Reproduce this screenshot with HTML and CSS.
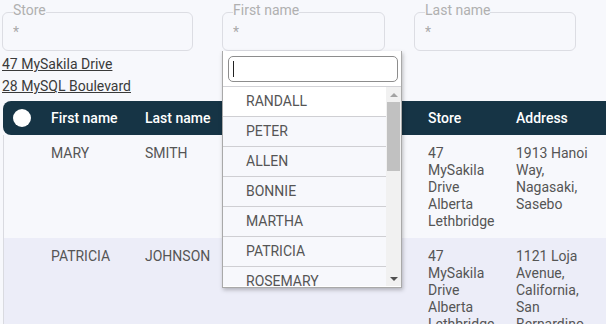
FILE: index.html
```html
<!DOCTYPE html>
<html lang="en">
<head>
<meta charset="utf-8">
<title>Customers</title>
<link rel="stylesheet" href="styles.css">
</head>
<body>
<div class="page">
  <div class="filters">
    <fieldset class="filter filter-store">
      <legend>Store</legend>
      <input class="filter-input" placeholder="*">
    </fieldset>
    <fieldset class="filter filter-first">
      <legend>First name</legend>
      <input class="filter-input" placeholder="*">
      <div class="dropdown">
        <label class="search-box"><input class="dropdown-search" autofocus></label>
        <div class="dropdown-body">
          <ul class="dropdown-list">
            <li class="dropdown-item active">RANDALL</li>
            <li class="dropdown-item">PETER</li>
            <li class="dropdown-item">ALLEN</li>
            <li class="dropdown-item">BONNIE</li>
            <li class="dropdown-item">MARTHA</li>
            <li class="dropdown-item">PATRICIA</li>
            <li class="dropdown-item">ROSEMARY</li>
            <li class="dropdown-item">MARY</li>
            <li class="dropdown-item">LINDA</li>
            <li class="dropdown-item">BARBARA</li>
          </ul>
          <div class="scrollbar">
            <span class="sb-btn"><span class="tri tri-up"></span></span>
            <span class="sb-track"><span class="sb-thumb"></span></span>
            <span class="sb-btn"><span class="tri tri-down"></span></span>
          </div>
        </div>
      </div>
    </fieldset>
    <fieldset class="filter filter-last">
      <legend>Last name</legend>
      <input class="filter-input" placeholder="*">
    </fieldset>
  </div>
  <div class="links">
    <a href="#">47 MySakila Drive</a>
    <a href="#">28 MySQL Boulevard</a>
  </div>
  <div class="table-wrap">
    <table class="grid">
      <colgroup>
        <col class="c-check"><col class="c-first"><col class="c-last"><col class="c-email"><col class="c-store"><col class="c-address"><col class="c-city">
      </colgroup>
      <thead>
        <tr>
          <th class="check"><span class="dot"></span></th>
          <th>First name</th>
          <th>Last name</th>
          <th>Email</th>
          <th>Store</th>
          <th>Address</th>
          <th>City</th>
        </tr>
      </thead>
      <tbody>
        <tr class="row">
          <td class="check"></td>
          <td>MARY</td>
          <td>SMITH</td>
          <td></td>
          <td>47 MySakila Drive Alberta Lethbridge</td>
          <td>1913 Hanoi Way, Nagasaki, Sasebo</td>
          <td>Sasebo</td>
        </tr>
        <tr class="row alt">
          <td class="check"></td>
          <td>PATRICIA</td>
          <td>JOHNSON</td>
          <td></td>
          <td>47 MySakila Drive Alberta Lethbridge</td>
          <td>1121 Loja Avenue, California, San Bernardino</td>
          <td>San Bernardino</td>
        </tr>
      </tbody>
    </table>
  </div>
</div>
</body>
</html>
```

FILE: styles.css
```css
* { box-sizing: border-box; }

html, body {
  margin: 0;
  background: #f7f8fc;
  font-family: Roboto, "Liberation Sans", sans-serif;
  color: #555;
}

.page {
  width: 606px;
  height: 324px;
  overflow: hidden;
  padding: 2px 0 0 0;
}

.filters {
  display: flex;
  gap: 29px;
  padding-left: 2px;
}

.filter {
  position: relative;
  margin: 0;
  padding: 2px 10px 10px;
  border: 1px solid #dcdde3;
  border-radius: 6px;
  min-width: 0;
}

.filter-store { width: 191px; }
.filter-first { width: 163px; }
.filter-last { width: 162px; }

.filter legend {
  padding: 0 0 4px 0;
  font-size: 14px;
  line-height: 16px;
  color: #b0b0b0;
}

.filter-input {
  display: block;
  width: 100%;
  height: 16px;
  padding: 0;
  border: none;
  background: transparent;
  font-family: inherit;
  font-size: 14px;
  line-height: 16px;
  color: #555;
  outline: none;
}

.filter-input::placeholder { color: #aaa; }

.links {
  display: flex;
  flex-direction: column;
  margin-top: 2px;
  padding-left: 2px;
}

.links a {
  font-size: 14px;
  line-height: 22px;
  color: #3a3a3a;
  text-decoration: underline;
  width: max-content;
}

.table-wrap {
  margin-top: 4px;
  padding-left: 3px;
}

.grid {
  table-layout: fixed;
  width: 717px;
  border-collapse: separate;
  border-spacing: 0;
  font-size: 14px;
}

.c-check { width: 36px; }
.c-first { width: 94px; }
.c-last { width: 94px; }
.c-email { width: 189px; }
.c-store { width: 88px; }
.c-address { width: 96px; }
.c-city { width: 120px; }

.grid th {
  height: 34px;
  padding: 0 8px 0 12px;
  background: #163445;
  color: #fff;
  font-weight: 500;
  text-align: left;
  vertical-align: middle;
  white-space: nowrap;
}

.grid th.check {
  padding: 0 0 0 10px;
  border-radius: 8px 0 0 8px;
}

.dot {
  display: block;
  width: 18px;
  height: 18px;
  border-radius: 50%;
  background: #fff;
}

.grid td {
  padding: 10px 8px 8px 12px;
  line-height: 17px;
  vertical-align: top;
  color: #555;
}

.grid td.check { border-left: 1px solid #d9dae0; }

.row.alt td { background: #ecedf8; }

.dropdown {
  position: absolute;
  left: -1px;
  top: calc(100% + 1px);
  z-index: 5;
  display: flex;
  flex-direction: column;
  width: 180px;
  height: 237px;
  padding-top: 5px;
  background: #fff;
  border: 1px solid #a9a9a9;
  border-top: none;
  box-shadow: 1px 2px 4px rgba(0, 0, 0, 0.25);
}

.search-box {
  position: relative;
  display: block;
  margin: 0 0 0 5px;
  width: 170px;
  height: 26px;
}

.search-box::after {
  content: "";
  position: absolute;
  left: 5px;
  top: 5px;
  width: 1px;
  height: 16px;
  background: #222;
}

.dropdown-search {
  display: block;
  width: 170px;
  height: 26px;
  padding: 0 4px;
  border: 1px solid #8d8d8d;
  border-radius: 5px;
  background: #fff;
  font-family: inherit;
  font-size: 14px;
  outline: none;
  caret-color: transparent;
}

.dropdown-body {
  display: flex;
  margin-top: 4px;
  height: 200px;
  border-top: 1px solid #d2d2d6;
}

.dropdown-list {
  flex: 1;
  list-style: none;
  margin: 0;
  padding: 0;
  overflow: hidden;
}

.dropdown-item {
  height: 30px;
  line-height: 29px;
  padding-left: 23px;
  border-bottom: 1px solid #cfcfd3;
  background: #f7f8fc;
  font-size: 14px;
  color: #555;
}

.dropdown-item.active { background: #fff; }

.scrollbar {
  display: flex;
  flex-direction: column;
  width: 15px;
  background: #f1f1f1;
}

.sb-btn {
  display: flex;
  align-items: center;
  justify-content: center;
  height: 15px;
  flex: none;
}

.sb-track {
  flex: 1;
  padding: 0 1px;
}

.sb-thumb {
  display: block;
  height: 69px;
  background: #c1c1c1;
}

.tri {
  width: 0;
  height: 0;
  border-left: 4px solid transparent;
  border-right: 4px solid transparent;
}

.tri-up { border-bottom: 4px solid #a3a3a3; }
.tri-down { border-top: 4px solid #505050; }
```
